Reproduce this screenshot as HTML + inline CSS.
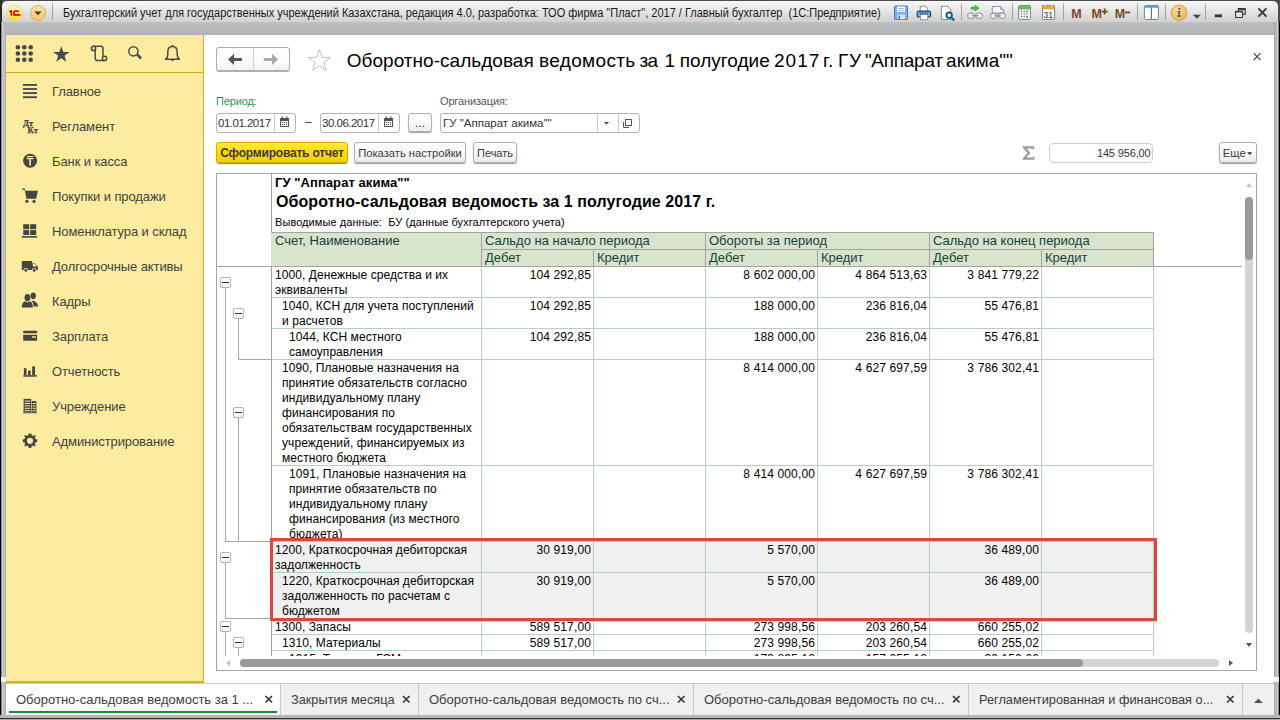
<!DOCTYPE html>
<html><head><meta charset="utf-8">
<style>
*{box-sizing:border-box;margin:0;padding:0}
html,body{width:1280px;height:720px;overflow:hidden;background:#fff;font-family:"Liberation Sans",sans-serif;color:#000}
.a{position:absolute}
#win{position:absolute;left:0;top:0;width:1280px;height:720px;background:#a9a9a9}
#titlebar{left:0;top:0;width:1280px;height:22px;background:#4a4a4a}
#titlebar2{left:2px;top:1px;width:1276px;height:21px;border-radius:5px 5px 0 0;background:linear-gradient(#f7f7f7,#e9e9e9 8px,#dadada 16px,#d2d2d2 21px)}
#band{left:0;top:22px;width:1280px;height:13px;background:linear-gradient(#c0c0c2,#b2b3b5)}
#lborder{left:0;top:22px;width:6px;height:698px;background:linear-gradient(90deg,#000 0,#000 1px,#888 1px,#888 2px,#d0d2d2 2px,#d0d2d2 3px,#c0c0c0 3px,#c0c0c0 5px,#b0b0b4 5px)}
#lborder2{left:0;top:0;width:1.5px;height:22px;background:#2b2b2b}
#rborder{left:1274px;top:22px;width:6px;height:698px;background:linear-gradient(90deg,#a6a8ac 0,#a6a8ac 1px,#b8b8b8 1px,#b8b8b8 3px,#cdcdcd 3px,#cdcdcd 4px,#888 4px,#888 5px,#000 5px)}
#rborder2{left:1278px;top:0;width:2px;height:22px;background:#4a4a4a}
.wtitle{left:63px;top:6px;font-size:12px;color:#1a1a1a;white-space:nowrap;line-height:14px;transform:scaleX(0.917);transform-origin:0 0}
.sep{width:1px;background:#c4c4c4;box-shadow:1px 0 0 #fafafa}
#side{left:6px;top:35px;width:198px;height:648px;background:#fbeca0;border-right:1px solid #c9ab28;border-bottom:2px solid #d0b030}
#sidesep{left:6px;top:72px;width:197px;height:1px;background:#c9ab28}
.mi{left:52px;font-size:13px;color:#424242;white-space:nowrap;line-height:16px;letter-spacing:-0.1px}
#main{left:204px;top:35px;width:1070px;height:648px;background:#fff}
.lbl{font-size:11px;white-space:nowrap;line-height:14px;letter-spacing:-0.15px}
.inp{background:#fff;border:1px solid #b5b5b5;border-radius:3px}
.btn{background:linear-gradient(#fefefe,#f8f8f8 55%,#ebebeb);border:1px solid #aeaeae;border-radius:3px;box-shadow:0 1px 1px #9c9c9c;font-size:12px;color:#3a3a3a;white-space:nowrap;text-align:center;line-height:19px}
#tframe{left:216px;top:173px;width:1041px;height:498px;border:1px solid #a0a0a0;background:#fff;overflow:hidden}
.t{font-size:12px;line-height:15px;white-space:nowrap;color:#000;letter-spacing:0.07px}
.n{letter-spacing:0.13px}
.hd{background:#d8e4cb;color:#173f3a;font-size:13px;line-height:16px;white-space:nowrap;padding-left:3px;overflow:hidden}
#tabs{left:6px;top:683px;width:1268px;height:32px;background:#f0f0f0;border-top:1px solid #c8c8c8}
#bstrip{left:0;top:715px;width:1280px;height:5px;background:linear-gradient(#b6b6b6 0,#b6b6b6 3px,#353535 3px,#353535 4px,#a6a6a6 4px)}
.tab{top:684px;height:31px;font-size:13px;color:#3c3c3c;white-space:nowrap;line-height:16px}
.mbox{width:11px;height:11px;border:1px solid #b4b4b4;border-radius:2px;background:linear-gradient(#fff,#f2f2f2)}
.mbox:after{content:"";position:absolute;left:1px;top:4px;width:7px;height:1px;background:#333}
.tx{font-size:15px;color:#444;font-weight:bold}
</style></head><body>
<div id="win">
 <div class="a" id="titlebar"></div>
 <div class="a" id="titlebar2"></div>
 <div class="a" id="band"></div>
 <div class="a" id="lborder2"></div>
 <div class="a" id="rborder"></div>
 <div class="a" id="lborder"></div>
 <div class="a" id="rborder2"></div>

<!--TB-->
<svg class="a" style="left:0;top:0" width="1280" height="24">
 <defs><linearGradient id="lg1" x1="0" y1="0" x2="0" y2="1"><stop offset="0" stop-color="#fff6c0"/><stop offset="0.55" stop-color="#ffee70"/><stop offset="1" stop-color="#ffe000"/></linearGradient>
 <linearGradient id="lg2" x1="0" y1="0" x2="0" y2="1"><stop offset="0" stop-color="#fde3b0"/><stop offset="1" stop-color="#f8c468"/></linearGradient></defs>
 <circle cx="14.9" cy="13" r="7.6" fill="url(#lg1)" stroke="#f0c860" stroke-width="0.6"/>
 <path d="M9.1 11.3 L11 9.9 H12.2 V15.8 H10.6 V11.9 L9.1 12.5 Z" fill="#e00000"/>
 <path d="M13.2 15.8 V12.6 Q13.2 9.9 16.2 9.9 Q18.9 9.9 19.3 12.1 L17.7 12.6 Q17.4 11.4 16.2 11.4 Q14.8 11.4 14.8 12.8 V14.1 H19.9 L20.8 15.8 Z" fill="#e00000"/>
 <circle cx="38" cy="13" r="7.6" fill="url(#lg2)" stroke="#d4a440" stroke-width="0.8"/>
 <path d="M34.4 11.6 H41.6 L38 15.2 Z" fill="#4a3418"/>
 <rect x="52" y="3.5" width="1" height="16.5" fill="#a4a4a4"/>
 <!-- save -->
 <rect x="894.5" y="6" width="13" height="13.5" rx="0.8" fill="#7cb2e4" stroke="#3d6db5" stroke-width="0.9"/>
 <rect x="897" y="6.6" width="8" height="5.2" fill="#fff"/>
 <rect x="898" y="8" width="6" height="0.8" fill="#9aa8c0"/><rect x="898" y="9.8" width="6" height="0.8" fill="#9aa8c0"/>
 <rect x="897.6" y="14.6" width="7.4" height="4.6" fill="#dfe6ee"/>
 <rect x="898.6" y="15.6" width="1.5" height="3.4" fill="#3d6db5"/>
 <!-- print -->
 <path d="M920.2 6.2 H925.3 L927.4 8.3 V11.5 H920.2 Z" fill="#fff" stroke="#4a8a78" stroke-width="0.8"/>
 <rect x="917.2" y="11.2" width="13.4" height="5.8" rx="1.6" fill="#7cb2e4" stroke="#1f3f7a" stroke-width="1.2"/>
 <rect x="919.2" y="12.7" width="9.5" height="0.9" fill="#1f3f7a"/>
 <rect x="920.4" y="14.4" width="7.4" height="5.4" fill="#fff" stroke="#4a8a78" stroke-width="0.7"/>
 <!-- preview -->
 <path d="M941.4 6.3 H947.6 L950.8 9.6 V19.6 H941.4 Z" fill="#fafafa" stroke="#607878" stroke-width="0.8"/>
 <circle cx="949.2" cy="15.2" r="2.7" fill="#fff" stroke="#1a5a8a" stroke-width="1.9"/>
 <path d="M951 17.2 L954.2 20.4" stroke="#1a5a8a" stroke-width="2.2"/>
 <rect x="961" y="3.5" width="1" height="16.5" fill="#a4a4a4"/>
 <!-- link green -->
 <path d="M971.2 7 H975 V5.2 L979 8.1 L975 11 V9.2 H971.2 Z" fill="#3ad23a" stroke="#1e9a1e" stroke-width="0.6"/>
 <rect x="967.8" y="13.2" width="6.6" height="5" rx="1.8" fill="#f4f4f4" stroke="#8a8a8a" stroke-width="1"/>
 <rect x="975.8" y="13.2" width="6.6" height="5" rx="1.8" fill="#f4f4f4" stroke="#8a8a8a" stroke-width="1"/>
 <rect x="971.5" y="15.2" width="7.2" height="1.1" fill="#8a8a8a"/>
 <!-- link doc -->
 <path d="M992.3 6.5 H1000.6 L1003.6 9.6 V13 H992.3 Z" fill="#fafafa" stroke="#7a7a8a" stroke-width="0.8"/>
 <path d="M1000.6 6.5 V9.6 H1003.6" fill="#d8d0f0" stroke="#7a70b0" stroke-width="0.7"/>
 <rect x="990.4" y="13.4" width="6.6" height="5" rx="1.8" fill="#f4f4f4" stroke="#8a8a8a" stroke-width="1"/>
 <rect x="998.6" y="13.4" width="6.6" height="5" rx="1.8" fill="#f4f4f4" stroke="#8a8a8a" stroke-width="1"/>
 <rect x="994" y="15.4" width="7.4" height="1.1" fill="#8a8a8a"/>
 <rect x="1012" y="3.5" width="1" height="16.5" fill="#a4a4a4"/>
 <!-- calc -->
 <rect x="1018.6" y="5.6" width="11.8" height="13.8" rx="1" fill="#fafafa" stroke="#5a7a7a" stroke-width="0.9"/>
 <rect x="1019" y="6" width="11" height="3.6" fill="#5cc65c"/>
 <g fill="#4a4a4a"><rect x="1020.8" y="11" width="1.2" height="1.1"/><rect x="1023.6" y="11" width="1.2" height="1.1"/><rect x="1020.8" y="13.4" width="1.2" height="1.1"/><rect x="1023.6" y="13.4" width="1.2" height="1.1"/><rect x="1026.4" y="13.4" width="1.2" height="1.1"/><rect x="1020.8" y="15.8" width="1.2" height="1.1"/><rect x="1023.6" y="15.8" width="1.2" height="1.1"/><rect x="1026.4" y="15.8" width="1.2" height="2.2"/></g>
 <rect x="1026.4" y="10.6" width="1.2" height="1.8" fill="#e02020"/>
 <!-- calendar -->
 <rect x="1042.4" y="5.4" width="12.2" height="14" rx="1" fill="#fafafa" stroke="#5a7a7a" stroke-width="0.9"/>
 <rect x="1042.8" y="5.8" width="11.4" height="3.6" fill="#e9a04e"/>
 <rect x="1045" y="4.2" width="1" height="2.4" fill="#fff"/><rect x="1051.2" y="4.2" width="1" height="2.4" fill="#fff"/>
 <text x="1043.6" y="17.8" font-family="Liberation Sans" font-size="8.6" fill="#333">31</text>
 <rect x="1063" y="3.5" width="1" height="16.5" fill="#a4a4a4"/>
 <g font-family="Liberation Sans" font-weight="bold" fill="#7a4a1c">
  <text x="1071.2" y="17.6" font-size="12.5">M</text>
  <text x="1091.6" y="17.6" font-size="12.5">M</text>
  <text x="1114.8" y="17.6" font-size="12.5">M</text>
 </g>
 <path d="M1101.6 11.6 H1107.8 M1104.7 8.6 V14.6" stroke="#7a4a1c" stroke-width="1.8"/>
 <path d="M1125 12.4 H1130.2" stroke="#7a4a1c" stroke-width="1.8"/>
 <rect x="1137" y="3.5" width="1" height="16.5" fill="#a4a4a4"/>
 <!-- panel -->
 <rect x="1144.4" y="5.6" width="14" height="13.8" rx="1" fill="#fff" stroke="#587a80" stroke-width="0.9"/>
 <rect x="1144.8" y="5.4" width="13.2" height="2.4" fill="#4aa0f2"/>
 <rect x="1150.8" y="7.6" width="1" height="11.4" fill="#555"/>
 <rect x="1165" y="3.5" width="1" height="16.5" fill="#a4a4a4"/>
 <!-- info -->
 <defs><radialGradient id="ig" cx="0.4" cy="0.35" r="0.7"><stop offset="0" stop-color="#fde2a8"/><stop offset="1" stop-color="#f0b04e"/></radialGradient></defs>
 <circle cx="1179.1" cy="12.7" r="7.8" fill="url(#ig)" stroke="#d8a02c" stroke-width="0.9"/>
 <circle cx="1179.4" cy="8.8" r="1.1" fill="#555"/>
 <path d="M1177.3 11 H1180.4 L1179.6 15.6 H1181 V16.8 H1177 V15.6 H1178.2 L1178.6 12.2 H1177.3 Z" fill="#555"/>
 <path d="M1192.8 14.8 H1201 L1196.9 18.7 Z" fill="#444"/>
 <rect x="1205" y="3.5" width="1" height="16.5" fill="#a4a4a4"/>
 <rect x="1214.8" y="14.4" width="7.2" height="2.8" fill="#3a3a3a"/>
 <g fill="none" stroke="#3a3a3a" stroke-width="1.2"><rect x="1238.4" y="8.6" width="6.8" height="5.6"/><rect x="1235.6" y="11.4" width="6.8" height="6"/></g>
 <rect x="1236" y="11.6" width="6" height="1.4" fill="#3a3a3a"/><rect x="1238.8" y="8.8" width="6" height="1.4" fill="#3a3a3a"/>
 <rect x="1236.2" y="12.4" width="5.8" height="4.6" fill="#e6e6e6"/>
 <path d="M1258.4 8.4 L1266.4 16.6 M1266.4 8.4 L1258.4 16.6" stroke="#3a3a3a" stroke-width="2"/>
</svg>
<!--/TB-->
 <div class="a wtitle">Бухгалтерский учет для государственных учреждений Казахстана, редакция 4.0, разработка: ТОО фирма "Пласт", 2017 / Главный бухгалтер&nbsp; (1С:Предприятие)</div>

 <div class="a" id="side"></div>
 <div class="a" id="sidesep"></div>
 <div class="a" id="main"></div>

<!--SIDE-->
<svg class="a" style="left:0;top:0" width="204" height="460" viewBox="0 0 204 460">
 <g fill="#4a4a4a">
  <circle cx="17.9" cy="47.2" r="2.3"/><circle cx="24.3" cy="47.2" r="2.3"/><circle cx="30.7" cy="47.2" r="2.3"/>
  <circle cx="17.9" cy="53.5" r="2.3"/><circle cx="24.3" cy="53.5" r="2.3"/><circle cx="30.7" cy="53.5" r="2.3"/>
  <circle cx="17.9" cy="59.8" r="2.3"/><circle cx="24.3" cy="59.8" r="2.3"/><circle cx="30.7" cy="59.8" r="2.3"/>
  <path d="M61.3 46.3 L63.3 52 L69.4 52.1 L64.5 55.8 L66.3 61.8 L61.3 58.2 L56.3 61.8 L58.1 55.8 L53.2 52.1 L59.3 52 Z"/>
 </g>
 <g fill="none" stroke="#4a4a4a" stroke-width="1.5">
  <path d="M93.5 46.2 H101 Q103 46.2 103 48.5 V56.5"/>
  <path d="M95.2 48.8 V58.2 Q95.2 60.6 97.6 60.6 H104.5"/>
  <circle cx="93.5" cy="48.4" r="2.1"/>
  <circle cx="104.5" cy="58.4" r="2.1"/>
  <circle cx="133.4" cy="51.3" r="4.6"/>
  <path d="M165.6 59.2 H179.4 Q177.2 57.6 177.2 54.8 V51.8 Q177.2 46.4 172.5 46.4 Q167.8 46.4 167.8 51.8 V54.8 Q167.8 57.6 165.6 59.2 Z" stroke-linejoin="round"/>
 </g>
 <g fill="#4a4a4a">
  <path d="M136.2 55.3 L138 53.5 L142 57.6 L140.2 59.4 Z"/>
  <path d="M171.3 46 L172.5 44.6 L173.7 46 Z"/>
  <path d="M170.8 59.8 H174.2 L172.5 61.6 Z"/>
 </g>
 <g fill="#454545">
  <rect x="23" y="84" width="14" height="1.8"/><rect x="23" y="88.1" width="14" height="1.8"/><rect x="23" y="92.2" width="14" height="1.8"/><rect x="23" y="96.3" width="14" height="1.8"/>
  <text x="22.9" y="125.8" font-family="Liberation Serif" font-weight="bold" font-size="8.6" letter-spacing="0.2" stroke="#454545" stroke-width="0.25">Дт</text>
  <text x="27.6" y="133" font-family="Liberation Serif" font-weight="bold" font-size="8.6" letter-spacing="0.2" stroke="#454545" stroke-width="0.25">Кт</text>
  <circle cx="30.1" cy="160.8" r="7"/>
  <path d="M22.2 188.4 H24.6 L25.6 190.8 H37.9 L36.1 198.7 H26.4 L24.9 190.6 L23.8 189.8 H22.2 Z"/>
  <circle cx="26.9" cy="201.3" r="1.6"/><circle cx="34" cy="201.3" r="1.6"/>
  <rect x="23.2" y="224.2" width="6" height="5"/><rect x="30.2" y="224.2" width="6" height="5"/>
  <rect x="23.2" y="230.1" width="6" height="4.9"/><rect x="30.2" y="230.1" width="6" height="4.9"/>
  <rect x="21.8" y="236.1" width="15.3" height="1.6"/>
  <path d="M21.8 261 H32.2 V263.5 H35.2 L38 267 V270 H21.8 Z"/>
  <circle cx="25.8" cy="270.3" r="1.9" stroke="#fbeca0" stroke-width="0.9"/><circle cx="34.2" cy="270.3" r="1.9" stroke="#fbeca0" stroke-width="0.9"/>
  <path d="M21.8 307.5 Q21.8 302.2 25 301.2 L27.4 302.6 L29.8 301.2 Q32.8 302.2 32.8 307.5 Z"/>
  <ellipse cx="27.4" cy="297.6" rx="2.9" ry="3.6"/>
  <path d="M31.5 300.8 Q34.8 300.8 36 302.2 Q38 303 38 306.5 H33.6 Q33.4 302.5 31.5 300.8 Z"/>
  <ellipse cx="33.2" cy="295.8" rx="2.7" ry="3.4"/>
  <rect x="23.2" y="330.8" width="13.9" height="2.4" rx="0.6"/>
  <path d="M23.2 334.8 H37.1 V340.3 Q37.1 340.8 36.5 340.8 H23.8 Q23.2 340.8 23.2 340.3 Z"/>
  <rect x="23.3" y="375.2" width="13.4" height="1.5"/>
  <rect x="23.9" y="368.2" width="2.6" height="7"/><rect x="28" y="370.6" width="2.6" height="4.6"/><rect x="32.2" y="366.3" width="2.8" height="8.9"/>
  <rect x="23.6" y="398.9" width="7.6" height="13.4"/><rect x="31.8" y="401" width="4.6" height="11.3"/>
  <rect x="23" y="412.3" width="14" height="0.9"/>
  <path d="M29.9 433.6 L31.2 433.6 L31.7 435.3 L33.3 436 L34.9 435 L35.8 435.9 L34.8 437.5 L35.5 439.1 L37.2 439.6 V441.9 L35.5 442.4 L34.8 444 L35.8 445.6 L34.9 446.5 L33.3 445.5 L31.7 446.2 L31.2 447.9 H28.8 L28.3 446.2 L26.7 445.5 L25.1 446.5 L24.2 445.6 L25.2 444 L24.5 442.4 L22.8 441.9 V439.6 L24.5 439.1 L25.2 437.5 L24.2 435.9 L25.1 435 L26.7 436 L28.3 435.3 L28.8 433.6 Z"/>
 </g>
 <g fill="#fbeca0">
  <rect x="26.8" y="156" width="6.6" height="1.2"/><rect x="26.8" y="158" width="6.6" height="1.2"/><rect x="29.3" y="158" width="1.6" height="7.6"/>
  <path d="M32.8 263.9 H35 L37 266.6 H32.8 Z"/>
  <rect x="31.9" y="336.3" width="4" height="1.4"/>
  <rect x="24.6" y="400.6" width="5.6" height="1"/><rect x="24.6" y="403" width="5.6" height="1"/><rect x="24.6" y="405.4" width="5.6" height="1"/><rect x="24.6" y="407.8" width="5.6" height="1"/><rect x="24.6" y="410.2" width="5.6" height="1"/>
  <rect x="32.6" y="403" width="3" height="1"/><rect x="32.6" y="405.4" width="3" height="1"/><rect x="32.6" y="407.8" width="3" height="1"/><rect x="32.6" y="410.2" width="3" height="1"/>
  <circle cx="30" cy="440.8" r="3.1"/>
 </g>
</svg>
<div class="a mi" style="top:84px">Главное</div>
<div class="a mi" style="top:119px">Регламент</div>
<div class="a mi" style="top:154px">Банк и касса</div>
<div class="a mi" style="top:189px">Покупки и продажи</div>
<div class="a mi" style="top:224px">Номенклатура и склад</div>
<div class="a mi" style="top:259px">Долгосрочные активы</div>
<div class="a mi" style="top:294px">Кадры</div>
<div class="a mi" style="top:329px">Зарплата</div>
<div class="a mi" style="top:364px">Отчетность</div>
<div class="a mi" style="top:399px">Учреждение</div>
<div class="a mi" style="top:434px">Администрирование</div>
<!--/SIDE-->

<!--FORM-->
<div class="a" style="left:216px;top:47px;width:74px;height:24px;border:1px solid #acacac;border-radius:3px;background:linear-gradient(#fefefe,#fbfbfb 60%,#f0f1f3);box-shadow:0 1px 0 #b0b0b0"></div>
<div class="a" style="left:253px;top:48px;width:1px;height:22px;background:#d0d0d0"></div>
<svg class="a" style="left:216px;top:47px" width="74" height="25">
 <path d="M12 12.4 L18 6.8 V10.9 H25.9 V14 H18 V18 Z" fill="#555"/>
 <path d="M62 12.4 L56 6.8 V10.9 H47.8 V14 H56 V18 Z" fill="#a8a8a8"/>
</svg>
<svg class="a" style="left:307px;top:48px" width="25" height="24">
 <path d="M12.4 1.6 L15.1 9.3 L23.2 9.5 L16.8 14.5 L19.1 22.3 L12.4 17.6 L5.7 22.3 L8 14.5 L1.6 9.5 L9.7 9.3 Z" fill="#fff" stroke="#b8bcc4" stroke-width="0.9"/>
</svg>
<div class="a" style="left:0;top:49.5px;font-size:18.6px;line-height:22px;white-space:nowrap"><span class="a" style="left:346.75px;font-size:19.0px;letter-spacing:0.029px">Оборотно-сальдовая</span><span class="a" style="left:539.00px;font-size:19.0px;letter-spacing:0.344px">ведомость</span><span class="a" style="left:639.50px;font-size:19.0px;letter-spacing:-0.8px">за</span><span class="a" style="left:664.50px;font-size:19.0px;letter-spacing:0.0px">1</span><span class="a" style="left:679.80px;font-size:19.0px;letter-spacing:0.0px">полугодие</span><span class="a" style="left:773.90px;font-size:19.0px;letter-spacing:1.067px">2017</span><span class="a" style="left:823.00px;font-size:19.0px;letter-spacing:0.4px">г.</span><span class="a" style="left:837.90px;font-size:19.0px;letter-spacing:0.7px">ГУ</span><span class="a" style="left:864.90px;font-size:19.0px;letter-spacing:-0.271px">"Аппарат</span><span class="a" style="left:946.10px;font-size:19.0px;letter-spacing:0.0px">акима""</span></div>
<svg class="a" style="left:1250px;top:50px" width="14" height="14"><path d="M3.6 3.2 L10.6 10.2 M10.6 3.2 L3.6 10.2" stroke="#444" stroke-width="1.2"/></svg>

<div class="a lbl" style="left:216px;top:94px;color:#1f9a52">Период:</div>
<div class="a lbl" style="left:440px;top:94px;color:#555">Организация:</div>

<div class="a inp" style="left:216px;top:113px;width:80px;height:20px"></div>
<div class="a" style="left:274px;top:114px;width:1px;height:18px;background:#c8c8c8"></div>
<div class="a" style="left:218px;top:116px;font-size:11.5px;line-height:14px;color:#333;white-space:nowrap;letter-spacing:-0.5px">01.01.2017</div>
<div class="a" style="left:305px;top:115px;font-size:12px;color:#444">–</div>
<div class="a inp" style="left:320px;top:113px;width:80px;height:20px"></div>
<div class="a" style="left:378px;top:114px;width:1px;height:18px;background:#c8c8c8"></div>
<div class="a" style="left:322px;top:116px;font-size:11.5px;line-height:14px;color:#333;white-space:nowrap;letter-spacing:-0.5px">30.06.2017</div>
<svg class="a" style="left:279px;top:116px" width="12" height="14"><g fill="#555"><rect x="1" y="2" width="9" height="9" rx="0.5"/><rect x="2.5" y="0.5" width="1.2" height="2.5"/><rect x="7.3" y="0.5" width="1.2" height="2.5"/></g><g fill="#fff"><rect x="2" y="5" width="7" height="5"/></g><g fill="#555"><rect x="2.8" y="6" width="1.2" height="1.1"/><rect x="4.9" y="6" width="1.2" height="1.1"/><rect x="7" y="6" width="1.2" height="1.1"/><rect x="2.8" y="8" width="1.2" height="1.1"/><rect x="4.9" y="8" width="1.2" height="1.1"/><rect x="7" y="8" width="1.2" height="1.1"/></g></svg>
<svg class="a" style="left:383px;top:116px" width="12" height="14"><g fill="#555"><rect x="1" y="2" width="9" height="9" rx="0.5"/><rect x="2.5" y="0.5" width="1.2" height="2.5"/><rect x="7.3" y="0.5" width="1.2" height="2.5"/></g><g fill="#fff"><rect x="2" y="5" width="7" height="5"/></g><g fill="#555"><rect x="2.8" y="6" width="1.2" height="1.1"/><rect x="4.9" y="6" width="1.2" height="1.1"/><rect x="7" y="6" width="1.2" height="1.1"/><rect x="2.8" y="8" width="1.2" height="1.1"/><rect x="4.9" y="8" width="1.2" height="1.1"/><rect x="7" y="8" width="1.2" height="1.1"/></g></svg>
<div class="a btn" style="left:408px;top:113px;width:24px;height:19px;line-height:19px">...</div>

<div class="a inp" style="left:440px;top:113px;width:200px;height:20px"></div>
<div class="a" style="left:597px;top:114px;width:1px;height:18px;background:#c8c8c8"></div>
<div class="a" style="left:618px;top:114px;width:1px;height:18px;background:#c8c8c8"></div>
<div class="a" style="left:443px;top:116px;font-size:11.5px;line-height:14px;color:#333;white-space:nowrap">ГУ "Аппарат акима""</div>
<svg class="a" style="left:598px;top:114px" width="42" height="18"><path d="M6 8 H11 L8.5 10.6 Z" fill="#444"/><g fill="none" stroke="#555" stroke-width="1"><rect x="27.5" y="5.5" width="6" height="6"/><path d="M25.5 8 V13.5 H31"/></g></svg>

<div class="a" style="left:216px;top:142px;width:132px;height:21px;border:1px solid #d2ae00;border-radius:3px;background:linear-gradient(#ffeb3b,#fcdc00 50%,#f2cf00);box-shadow:0 1px 1px #a08a20;font-size:12px;font-weight:bold;color:#3b3b3b;text-align:center;line-height:21px;white-space:nowrap;letter-spacing:-0.2px">Сформировать отчет</div>
<div class="a btn" style="left:354px;top:142px;width:112px;height:21px;font-size:11.2px;line-height:21px">Показать настройки</div>
<div class="a btn" style="left:473px;top:142px;width:44px;height:21px;font-size:11px;line-height:21px">Печать</div>

<svg class="a" style="left:1020px;top:144px" width="18" height="18"><path d="M2.6 2.2 H14.2 V5.4 H12.8 L12.6 4.6 H6.6 L10.4 9.1 L6.4 13.6 H12.8 L13 12.6 H14.4 V15.8 H2.6 V14.4 L7.6 8.9 L2.6 3.6 Z" fill="#9c9c9c"/></svg>
<div class="a inp" style="left:1049px;top:143px;width:104px;height:20px;border-color:#cfcfcf;border-radius:4px"></div>
<div class="a" style="left:1050px;top:146px;width:100.5px;font-size:11px;line-height:14px;color:#333;text-align:right;letter-spacing:-0.15px">145 956,00</div>
<div class="a btn" style="left:1219px;top:142px;width:38px;height:21px;text-align:left;padding-left:2.8px;line-height:20px;font-size:11.3px">Еще</div><svg class="a" style="left:1246px;top:151px" width="8" height="6"><path d="M1 1.2 H6.4 L3.7 4 Z" fill="#333"/></svg>
<!--/FORM-->
 <div class="a" id="tabs"></div>
 <div class="a" id="bstrip"></div>
 <div class="a" style="left:1px;top:677px;width:5px;height:5px;background:#f4f4f4"></div>
 <div class="a" style="left:1274px;top:677px;width:5px;height:5px;background:#f4f4f4"></div>

<!--TABS-->
<div class="a" style="left:6px;top:684px;width:274px;height:31px;background:#fff"></div>
<div class="a" style="left:9px;top:711px;width:268px;height:2px;background:#0f9038"></div>
<div class="a" style="left:280px;top:684px;width:1px;height:31px;background:#c8c8c8"></div>
<div class="a" style="left:418px;top:684px;width:1px;height:31px;background:#c8c8c8"></div>
<div class="a" style="left:693px;top:684px;width:1px;height:31px;background:#c8c8c8"></div>
<div class="a" style="left:968px;top:684px;width:1px;height:31px;background:#c8c8c8"></div>
<div class="a" style="left:1242px;top:684px;width:1px;height:31px;background:#c8c8c8"></div>
<div class="a tab" style="left:16px;top:692px">Оборотно-сальдовая ведомость за 1 ...</div>
<div class="a tab" style="left:291px;top:692px;font-size:12.75px">Закрытия месяца</div>
<div class="a tab" style="left:429px;top:692px">Оборотно-сальдовая ведомость по сч...</div>
<div class="a tab" style="left:704px;top:692px">Оборотно-сальдовая ведомость по сч...</div>
<div class="a tab" style="left:979px;top:692px;font-size:12.75px">Регламентированная и финансовая о...</div>
<svg class="a" style="left:0;top:684px" width="1280" height="36">
 <g stroke="#3a3a3a" stroke-width="1.7">
  <path d="M265.5 12 L272 18.5 M272 12 L265.5 18.5"/>
  <path d="M403 12 L409.5 18.5 M409.5 12 L403 18.5"/>
  <path d="M678 12 L684.5 18.5 M684.5 12 L678 18.5"/>
  <path d="M953 12 L959.5 18.5 M959.5 12 L953 18.5"/>
  <path d="M1227 12 L1233.5 18.5 M1233.5 12 L1227 18.5"/>
 </g>
 <path d="M1254 19 H1262.8 L1258.4 14.5 Z" fill="#555"/>
</svg>
<!--/TABS-->
<!--TABLE-->
<div class="a" style="left:216px;top:173px;width:1041px;height:498px;border:1px solid #a6a6a6;background:#fff"></div>
<div class="a t" style="left:275px;top:174.5px;font-size:13px;font-weight:bold;line-height:15px">ГУ "Аппарат акима""</div>
<div class="a t" style="left:276px;top:193px;font-size:16px;font-weight:bold;line-height:18px">Оборотно-сальдовая ведомость за 1 полугодие 2017 г.</div>
<div class="a t" style="left:275px;top:216px;font-size:11px;line-height:13px">Выводимые данные:&nbsp; БУ (данные бухгалтерского учета)</div>
<div class="a" style="left:271px;top:174px;width:1px;height:92px;background:#a3a3a3"></div>
<div class="a" style="left:271px;top:232px;width:883px;height:35px;background:#d8e4cb"></div>
<div class="a" style="left:271px;top:232px;width:883px;height:1px;background:#a3a3a3"></div>
<div class="a" style="left:481px;top:249px;width:672px;height:1px;background:#a3a3a3"></div>
<div class="a" style="left:216px;top:266px;width:1026px;height:1px;background:#a3a3a3"></div>
<div class="a" style="left:481px;top:232px;width:1px;height:34px;background:#a3a3a3"></div>
<div class="a" style="left:593px;top:249px;width:1px;height:17px;background:#a3a3a3"></div>
<div class="a" style="left:705px;top:232px;width:1px;height:34px;background:#a3a3a3"></div>
<div class="a" style="left:817px;top:249px;width:1px;height:17px;background:#a3a3a3"></div>
<div class="a" style="left:929px;top:232px;width:1px;height:34px;background:#a3a3a3"></div>
<div class="a" style="left:1041px;top:249px;width:1px;height:17px;background:#a3a3a3"></div>
<div class="a" style="left:1153px;top:232px;width:1px;height:34px;background:#a3a3a3"></div>
<div class="a hd" style="left:272px;top:233px">Счет, Наименование</div>
<div class="a hd" style="left:482px;top:233px">Сальдо на начало периода</div>
<div class="a hd" style="left:706px;top:233px">Обороты за период</div>
<div class="a hd" style="left:930px;top:233px">Сальдо на конец периода</div>
<div class="a hd" style="left:482px;top:250px">Дебет</div>
<div class="a hd" style="left:594px;top:250px">Кредит</div>
<div class="a hd" style="left:706px;top:250px">Дебет</div>
<div class="a hd" style="left:818px;top:250px">Кредит</div>
<div class="a hd" style="left:930px;top:250px">Дебет</div>
<div class="a hd" style="left:1042px;top:250px">Кредит</div>
<div class="a" style="left:217px;top:267px;width:1025px;height:389px;overflow:hidden">
<div class="a" style="left:-217px;top:0;width:1280px;height:500px">
<div class="a t" style="left:275px;top:1px">1000, Денежные средства и их<br>эквиваленты</div>
<div class="a t n" style="left:482px;top:1px;width:109px;text-align:right">104 292,85</div>
<div class="a t n" style="left:706px;top:1px;width:109px;text-align:right">8 602 000,00</div>
<div class="a t n" style="left:818px;top:1px;width:109px;text-align:right">4 864 513,63</div>
<div class="a t n" style="left:930px;top:1px;width:109px;text-align:right">3 841 779,22</div>
<div class="a" style="left:271px;top:30px;width:883px;height:1px;background:#b7cfc5"></div>
<div class="a t" style="left:282px;top:32px">1040, КСН для учета поступлений<br>и расчетов</div>
<div class="a t n" style="left:482px;top:32px;width:109px;text-align:right">104 292,85</div>
<div class="a t n" style="left:706px;top:32px;width:109px;text-align:right">188 000,00</div>
<div class="a t n" style="left:818px;top:32px;width:109px;text-align:right">236 816,04</div>
<div class="a t n" style="left:930px;top:32px;width:109px;text-align:right">55 476,81</div>
<div class="a" style="left:271px;top:61px;width:883px;height:1px;background:#b7cfc5"></div>
<div class="a t" style="left:289px;top:63px">1044, КСН местного<br>самоуправления</div>
<div class="a t n" style="left:482px;top:63px;width:109px;text-align:right">104 292,85</div>
<div class="a t n" style="left:706px;top:63px;width:109px;text-align:right">188 000,00</div>
<div class="a t n" style="left:818px;top:63px;width:109px;text-align:right">236 816,04</div>
<div class="a t n" style="left:930px;top:63px;width:109px;text-align:right">55 476,81</div>
<div class="a" style="left:271px;top:92px;width:883px;height:1px;background:#b7cfc5"></div>
<div class="a t" style="left:282px;top:94px">1090, Плановые назначения на<br>принятие обязательств согласно<br>индивидуальному плану<br>финансирования по<br>обязательствам государственных<br>учреждений, финансируемых из<br>местного бюджета</div>
<div class="a t n" style="left:706px;top:94px;width:109px;text-align:right">8 414 000,00</div>
<div class="a t n" style="left:818px;top:94px;width:109px;text-align:right">4 627 697,59</div>
<div class="a t n" style="left:930px;top:94px;width:109px;text-align:right">3 786 302,41</div>
<div class="a" style="left:271px;top:198px;width:883px;height:1px;background:#b7cfc5"></div>
<div class="a t" style="left:289px;top:200px">1091, Плановые назначения на<br>принятие обязательств по<br>индивидуальному плану<br>финансирования (из местного<br>бюджета)</div>
<div class="a t n" style="left:706px;top:200px;width:109px;text-align:right">8 414 000,00</div>
<div class="a t n" style="left:818px;top:200px;width:109px;text-align:right">4 627 697,59</div>
<div class="a t n" style="left:930px;top:200px;width:109px;text-align:right">3 786 302,41</div>
<div class="a" style="left:271px;top:274px;width:883px;height:1px;background:#b7cfc5"></div>
<div class="a" style="left:272px;top:275px;width:881px;height:30px;background:#f0f0f0"></div>
<div class="a t" style="left:275px;top:276px">1200, Краткосрочная дебиторская<br>задолженность</div>
<div class="a t n" style="left:482px;top:276px;width:109px;text-align:right">30 919,00</div>
<div class="a t n" style="left:706px;top:276px;width:109px;text-align:right">5 570,00</div>
<div class="a t n" style="left:930px;top:276px;width:109px;text-align:right">36 489,00</div>
<div class="a" style="left:271px;top:305px;width:883px;height:1px;background:#b7cfc5"></div>
<div class="a" style="left:272px;top:306px;width:881px;height:45px;background:#f0f0f0"></div>
<div class="a t" style="left:282px;top:307px">1220, Краткосрочная дебиторская<br>задолженность по расчетам с<br>бюджетом</div>
<div class="a t n" style="left:482px;top:307px;width:109px;text-align:right">30 919,00</div>
<div class="a t n" style="left:706px;top:307px;width:109px;text-align:right">5 570,00</div>
<div class="a t n" style="left:930px;top:307px;width:109px;text-align:right">36 489,00</div>
<div class="a" style="left:271px;top:351px;width:883px;height:1px;background:#b7cfc5"></div>
<div class="a t" style="left:275px;top:353px">1300, Запасы</div>
<div class="a t n" style="left:482px;top:353px;width:109px;text-align:right">589 517,00</div>
<div class="a t n" style="left:706px;top:353px;width:109px;text-align:right">273 998,56</div>
<div class="a t n" style="left:818px;top:353px;width:109px;text-align:right">203 260,54</div>
<div class="a t n" style="left:930px;top:353px;width:109px;text-align:right">660 255,02</div>
<div class="a" style="left:271px;top:367px;width:883px;height:1px;background:#b7cfc5"></div>
<div class="a t" style="left:282px;top:369px">1310, Материалы</div>
<div class="a t n" style="left:482px;top:369px;width:109px;text-align:right">589 517,00</div>
<div class="a t n" style="left:706px;top:369px;width:109px;text-align:right">273 998,56</div>
<div class="a t n" style="left:818px;top:369px;width:109px;text-align:right">203 260,54</div>
<div class="a t n" style="left:930px;top:369px;width:109px;text-align:right">660 255,02</div>
<div class="a" style="left:271px;top:383px;width:883px;height:1px;background:#b7cfc5"></div>
<div class="a t" style="left:289px;top:385px">1315, Топливо, ГСМ</div>
<div class="a t n" style="left:706px;top:385px;width:109px;text-align:right">173 895,12</div>
<div class="a t n" style="left:818px;top:385px;width:109px;text-align:right">157 255,12</div>
<div class="a t n" style="left:930px;top:385px;width:109px;text-align:right">30 150,00</div>
<div class="a" style="left:271px;top:399px;width:883px;height:1px;background:#b7cfc5"></div>
<div class="a" style="left:481px;top:0px;width:1px;height:400px;background:#b7cfc5"></div>
<div class="a" style="left:593px;top:0px;width:1px;height:400px;background:#b7cfc5"></div>
<div class="a" style="left:705px;top:0px;width:1px;height:400px;background:#b7cfc5"></div>
<div class="a" style="left:817px;top:0px;width:1px;height:400px;background:#b7cfc5"></div>
<div class="a" style="left:929px;top:0px;width:1px;height:400px;background:#b7cfc5"></div>
<div class="a" style="left:1041px;top:0px;width:1px;height:400px;background:#b7cfc5"></div>
<div class="a" style="left:1153px;top:0px;width:1px;height:400px;background:#b7cfc5"></div>
<div class="a" style="left:271px;top:0px;width:1px;height:400px;background:#a3a3a3"></div>
<div class="a" style="left:225px;top:21px;width:1px;height:254px;background:#a8a8a8"></div>
<div class="a" style="left:225px;top:274px;width:46px;height:1px;background:#a8a8a8"></div>
<div class="a" style="left:238px;top:52px;width:1px;height:41px;background:#a8a8a8"></div>
<div class="a" style="left:238px;top:92px;width:33px;height:1px;background:#a8a8a8"></div>
<div class="a" style="left:238px;top:151px;width:1px;height:124px;background:#a8a8a8"></div>
<div class="a" style="left:225px;top:296px;width:1px;height:56px;background:#a8a8a8"></div>
<div class="a" style="left:225px;top:351px;width:46px;height:1px;background:#a8a8a8"></div>
<div class="a" style="left:225px;top:365px;width:1px;height:68px;background:#a8a8a8"></div>
<div class="a" style="left:238px;top:381px;width:1px;height:52px;background:#a8a8a8"></div>
<div class="a mbox" style="left:220px;top:10px"></div>
<div class="a mbox" style="left:233px;top:41px"></div>
<div class="a mbox" style="left:233px;top:140px"></div>
<div class="a mbox" style="left:220px;top:285px"></div>
<div class="a mbox" style="left:220px;top:354px"></div>
<div class="a mbox" style="left:233px;top:370px"></div>
</div></div>
<div class="a" style="left:270px;top:621px;width:887px;height:1px;background:#f7c948;opacity:0.8"></div>
<div class="a" style="left:270px;top:538px;width:887px;height:83px;border:3px solid #e2453c"></div>
<div class="a" style="left:1246px;top:183px;width:0;height:0;border-left:3px solid transparent;border-right:3px solid transparent;border-bottom:4px solid #c4c4c4"></div>
<div class="a" style="left:1245px;top:197px;width:8px;height:436px;border-radius:4px;background:#d4d4d4"></div>
<div class="a" style="left:1245px;top:197px;width:8px;height:63px;border-radius:4px;background:#9a9a9a"></div>
<div class="a" style="left:1246px;top:643px;width:0;height:0;border-left:3px solid transparent;border-right:3px solid transparent;border-top:4px solid #555"></div>
<div class="a" style="left:226px;top:660px;width:0;height:0;border-top:3px solid transparent;border-bottom:3px solid transparent;border-right:4px solid #c4c4c4"></div>
<div class="a" style="left:240px;top:659px;width:979px;height:8px;border-radius:4px;background:#d4d4d4"></div>
<div class="a" style="left:240px;top:659px;width:843px;height:8px;border-radius:4px;background:#9a9a9a"></div>
<div class="a" style="left:1229px;top:660px;width:0;height:0;border-top:3px solid transparent;border-bottom:3px solid transparent;border-left:4px solid #555"></div>
<!--/TABLE-->
</div>
</body></html>
